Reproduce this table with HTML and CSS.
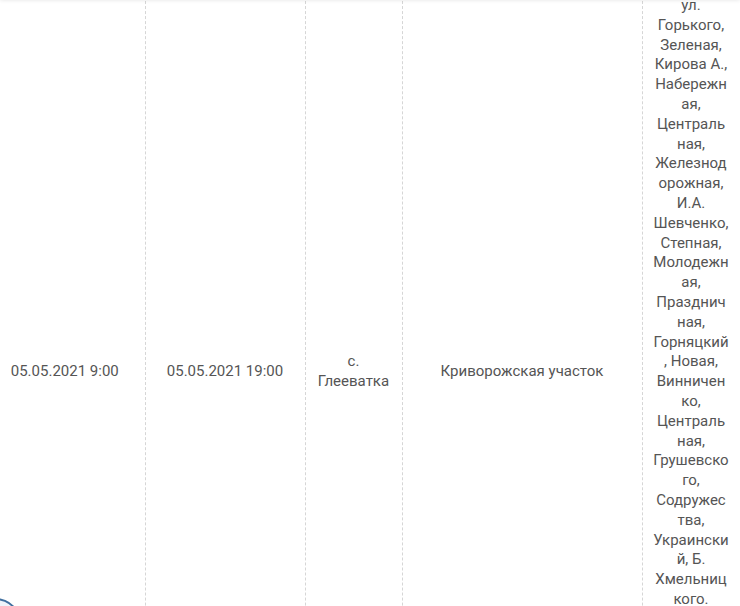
FILE: index.html
```html
<!DOCTYPE html>
<html>
<head>
    <title>Плановые отключения</title>
    <link rel="stylesheet" href="styles.css">
</head>
<body>
    <div class="top-shadow"></div>

    <div class="schedule">
        <table class="outages">
            <colgroup>
                <col class="col-start">
                <col class="col-end">
                <col class="col-place">
                <col class="col-area">
                <col class="col-streets">
            </colgroup>
            <tbody>
                <tr>
                    <td>05.05.2021 9:00</td>
                    <td>05.05.2021 19:00</td>
                    <td>с. Глееватка</td>
                    <td>Криворожская участок</td>
                    <td class="streets">ул. Горького, Зеленая, Кирова А., Набережная, Центральная, Железнодорожная, И.А. Шевченко, Степная, Молодежная, Праздничная, Горняцкий, Новая, Винниченко, Центральная, Грушевского, Содружества, Украинский, Б. Хмельницкого.<br>пер. Садовый, Школьный, Мирный, Полевой, Южный.</td>
                </tr>
            </tbody>
        </table>
    </div>

    <div class="chat-button"></div>
</body>
</html>
```

FILE: styles.css
```css
html, body {
    margin: 0;
    padding: 0;
    background: #fff;
    overflow: hidden;
}
body {
    font-family: Roboto, "Liberation Sans", sans-serif;
    font-size: 15px;
    line-height: 19.8px;
    color: #555;
}
.top-shadow {
    position: fixed;
    top: -4px;
    left: 0;
    right: 0;
    height: 4px;
    box-shadow: 0 0 4px rgba(0, 0, 0, 0.12);
}
.schedule {
    margin-top: -14px;
    margin-left: -15px;
}
.outages {
    width: 755px;
    table-layout: fixed;
    border-collapse: collapse;
}
.col-start { width: 160px; }
.col-end { width: 160px; }
.col-place { width: 97px; }
.col-area { width: 240px; }
.col-streets { width: 98px; }
.outages td {
    padding: 10px 10px 18px;
    text-align: center;
    vertical-align: middle;
    border-left: 1px dashed #d6d6d6;
    border-right: 1px dashed #d6d6d6;
    overflow-wrap: break-word;
    word-wrap: break-word;
}
.outages td:first-child {
    border-left: none;
}
.outages td.streets {
    padding-left: 10.5px;
    padding-right: 10.5px;
}
.chat-button {
    position: fixed;
    left: -32px;
    bottom: -46px;
    width: 50px;
    height: 50px;
    border-radius: 50%;
    border: 2px solid #3f6f9f;
    background: #eef4fa;
}
```
